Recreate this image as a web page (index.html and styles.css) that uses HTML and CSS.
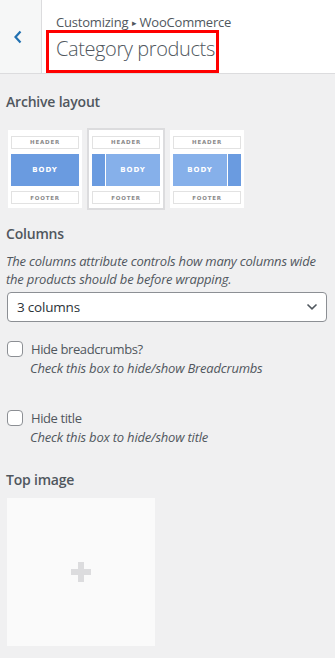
FILE: index.html
```html
<!DOCTYPE html>
<html lang="en">
<head>
  <meta charset="UTF-8">
  <meta name="viewport" content="width=device-width, initial-scale=1.0">
  <title>Category products</title>
  <link rel="stylesheet" href="styles.css">
</head>
<body>
  <div class="section-head">
    <button class="back" aria-label="Back">
      <svg width="10" height="14" viewBox="0 0 10 14"><path d="M7.5 1.5 L2.5 7 L7.5 12.5" fill="none" stroke="#2271b1" stroke-width="2.2"/></svg>
    </button>
    <div class="head-text">
      <div class="crumb">Customizing <span class="sep">&#9656;</span> WooCommerce</div>
      <div class="title-box"><h1>Category products</h1></div>
    </div>
  </div>

  <div class="controls">
    <div class="control">
      <div class="label">Archive layout</div>
      <div class="layouts">
        <div class="layout">
          <div class="thumb">
            <div class="part">HEADER</div>
            <div class="body-row"><div class="main dark">BODY</div></div>
            <div class="part">FOOTER</div>
          </div>
        </div>
        <div class="layout selected">
          <div class="thumb">
            <div class="part">HEADER</div>
            <div class="body-row"><div class="side"></div><div class="main">BODY</div></div>
            <div class="part">FOOTER</div>
          </div>
        </div>
        <div class="layout">
          <div class="thumb">
            <div class="part">HEADER</div>
            <div class="body-row"><div class="main">BODY</div><div class="side"></div></div>
            <div class="part">FOOTER</div>
          </div>
        </div>
      </div>
    </div>

    <div class="control columns">
      <div class="label">Columns</div>
      <div class="desc">The columns attribute controls how many columns wide the products should be before wrapping.</div>
      <div class="select">
        <span>3 columns</span>
        <svg width="12" height="8" viewBox="0 0 12 8"><path d="M1.5 1.5 L6 5.8 L10.5 1.5" fill="none" stroke="#50575e" stroke-width="1.6"/></svg>
      </div>
    </div>

    <div class="control check">
      <label class="check-row"><span class="box"></span>Hide breadcrumbs?</label>
      <div class="desc indent">Check this box to hide/show Breadcrumbs</div>
    </div>

    <div class="control check">
      <label class="check-row"><span class="box"></span>Hide title</label>
      <div class="desc indent">Check this box to hide/show title</div>
    </div>

    <div class="control image">
      <div class="label">Top image</div>
      <div class="placeholder"><span class="plus"></span></div>
    </div>
  </div>
</body>
</html>
```

FILE: styles.css
```css
body { margin: 0; background: #f0f0f1; font-family: "Open Sans", "Noto Sans", sans-serif; color: #50575e; }
.section-head { display: flex; height: 73px; background: #fff; border-bottom: 1px solid #dcdcde; }
.back { width: 42px; padding: 0 0 0 13px; border: none; border-right: 1px solid #dcdcde; background: #f6f7f7; display: flex; align-items: center; justify-content: flex-start; }
.head-text { padding: 13px 0 0 14px; }
.crumb { font-size: 13px; height: 18px; line-height: 18px; letter-spacing: -0.2px; color: #50575e; }
.sep { font-size: 9px; line-height: 0; vertical-align: 1px; }
.title-box { border: 3px solid #ff0000; margin: -1px 0 0 -10px; padding: 1px 4px 0 7px; height: 43px; box-sizing: border-box; width: 173px; }
h1 { margin: 0; font-size: 20px; font-weight: 300; line-height: 29px; letter-spacing: -0.4px; color: #50575e; white-space: nowrap; }

.controls { padding: 0 0 0 6px; }
.control { margin-top: 16px; }
.label { font-size: 14px; font-weight: 600; line-height: 24px; color: #50575e; letter-spacing: -0.2px; }
.layouts { display: flex; gap: 3px; margin: 14px 0 0 0; }
.layout { border: 2px solid transparent; padding: 0; }
.layout.selected { border-color: #dcdcde; }
.thumb { width: 74px; height: 78px; background: #fff; box-sizing: border-box; padding: 6px 3px 4px; display: flex; flex-direction: column; gap: 5px; }
.part { height: 11px; border: 1px solid #e2e2e2; font-size: 5.5px; font-family: "DejaVu Sans", sans-serif; font-weight: bold; color: #8a8a8a; letter-spacing: 0.8px; display: flex; align-items: center; justify-content: center; }
.body-row { height: 33px; display: flex; gap: 1px; background: #fff; }
.main { flex: 1; background: #86b0ea; color: #fff; font-family: "DejaVu Sans", sans-serif; font-size: 7px; font-weight: bold; letter-spacing: 1px; display: flex; align-items: center; justify-content: center; }
.main.dark { background: #6a9be0; }
.side { width: 13px; background: #6a9be0; }

.control.columns { margin-top: 12px; }
.desc { font-size: 13px; font-style: italic; line-height: 18px; color: #50575e; margin-top: 6px; letter-spacing: -0.2px; padding-right: 8px; }
.select { margin: 4px 8px 0 1px; height: 30px; box-sizing: border-box; background: #fff; border: 1px solid #8c8f94; border-radius: 4px; display: flex; align-items: center; justify-content: space-between; padding: 0 8px 0 9px; font-size: 13.5px; letter-spacing: -0.2px; color: #2c3338; }
.control.check { margin-top: 19px; }
.control.check + .control.check { margin-top: 33px; }
.check-row { display: flex; align-items: center; font-size: 13px; letter-spacing: -0.4px; line-height: 16px; color: #50575e; }
.box { width: 16px; height: 16px; box-sizing: border-box; border: 1px solid #8c8f94; border-radius: 4px; background: #fff; margin: 0 8px 0 1px; }
.desc.indent { margin: 2px 0 0 24px; }
.control.image { margin-top: 22px; }
.placeholder { margin: 6px 0 0 1px; width: 148px; height: 148px; background: #fafafa; display: flex; align-items: center; justify-content: center; }
.plus { width: 20px; height: 20px; position: relative; }
.plus::before, .plus::after { content: ""; position: absolute; background: #dcdcde; }
.plus::before { left: 0; top: 7px; width: 20px; height: 6px; }
.plus::after { left: 7px; top: 0; width: 6px; height: 20px; }
```
